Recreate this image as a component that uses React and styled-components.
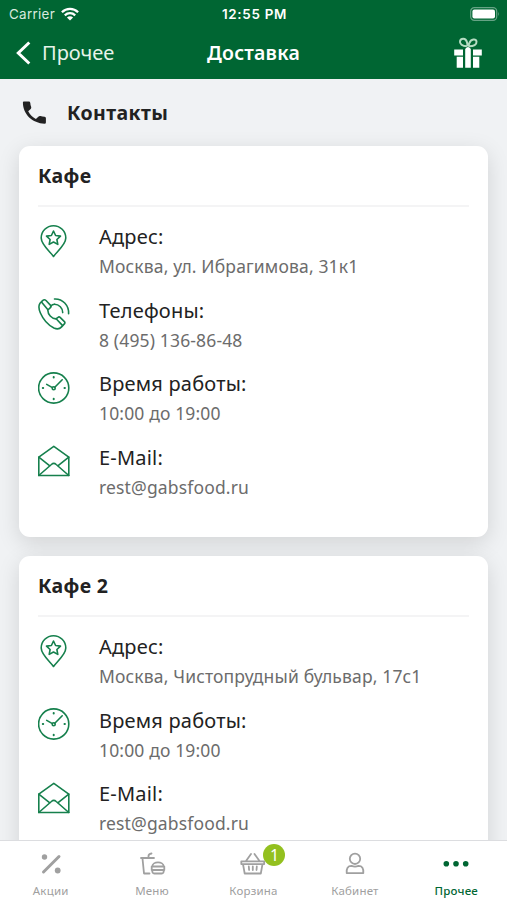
import React from 'react'
import styled, { createGlobalStyle } from 'styled-components';


const GlobalStyle = createGlobalStyle`
    * {
        box-sizing:border-box;
    }

    body{
        margin:0;
        overflow:hidden;
        font-family:'Noto Sans', 'Open Sans', sans-serif;
    }
`;

const Screen = styled.div`
    width:507px;
    height:900px;
    display:flex;
    flex-direction:column;
    overflow:hidden;
    background:#f0f2f4;
`;

const Header = styled.header`
    flex:none;
    height:79px;
    color:white;
    background:#006633;
`;

const StatusBar = styled.div`
    height:27px;
    padding:0 7px 0 9px;
    display:grid;
    grid-template-columns:1fr auto 1fr;
    align-items:center;
    font-family:Inter, 'Liberation Sans', sans-serif;
    font-size:13.4px;

    svg{
        display:block;
    }
`;

const Carrier = styled.div`
    display:flex;
    align-items:center;
    gap:6px;
    color:#d9eadf;
    letter-spacing:0.3px;
`;

const Time = styled.div`
    font-weight:600;
    letter-spacing:0.7px;
`;

const Battery = styled.div`
    display:flex;
    justify-content:flex-end;
`;

const NavBar = styled.div`
    height:51px;
    padding:0 24px 0 16px;
    display:grid;
    grid-template-columns:1fr auto 1fr;
    align-items:center;

    svg{
        display:block;
    }
`;

const Back = styled.div`
    display:flex;
    align-items:center;
    gap:11px;
    font-size:20px;
    line-height:26px;
    color:#e6f3ea;
`;

const Title = styled.h1`
    margin:0 0 0 8px;
    font-size:19.5px;
    font-weight:600;
    line-height:26px;
    letter-spacing:0.2px;
`;

const Gift = styled.div`
    display:flex;
    justify-content:flex-end;
`;

const Content = styled.main`
    flex:1;
    min-height:0;
    overflow:hidden;
    padding:0 19px;
`;

const SectionTitle = styled.div`
    height:67px;
    padding-left:3px;
    display:flex;
    align-items:center;
    gap:20px;

    h2{
        margin:0;
        font-size:19.5px;
        font-weight:700;
        letter-spacing:0.4px;
        color:#222222;
    }
`;

const Card = styled.section`
    height:391px;
    margin-bottom:19px;
    padding:0 19px;
    border-radius:11px;
    background:white;
    box-shadow:0 6px 22px rgba( 0, 0, 0, 0.13 );

    h3{
        height:61px;
        margin:0 0 15.4px;
        border-bottom:2px solid #f4f4f5;
        font-size:19.5px;
        font-weight:700;
        line-height:60px;
        letter-spacing:0.3px;
        color:#222222;
    }
`;

const Row = styled.div`
    height:73.5px;
    display:flex;
    gap:29px;

    svg{
        flex:none;
        margin-top:1.5px;
    }
`;

const Label = styled.div`
    height:29px;
    font-size:20px;
    line-height:29px;
    white-space:nowrap;
    letter-spacing:0.2px;
    color:#222222;
`;

const Value = styled.div`
    height:30px;
    font-size:17.5px;
    line-height:30px;
    white-space:nowrap;
    letter-spacing:0.15px;
    color:#6c6c6c;
`;

const TabBar = styled.nav`
    flex:none;
    height:60px;
    display:grid;
    grid-template-columns:repeat(5, 1fr);
    border-top:1px solid #dcdde0;
    background:white;
`;

const Tab = styled.div`
    display:flex;
    flex-direction:column;
    align-items:center;
    font-size:11.5px;
    line-height:16px;
    font-weight:${props => props.$active ? 500 : 400};
    color:${props => props.$active ? '#006633' : '#a0a0a0'};
    letter-spacing:0.2px;
`;

const TabIcon = styled.div`
    position:relative;
    height:42px;
    padding-top:7px;

    svg{
        display:block;
    }
`;

//cart counter
const Badge = styled.span`
    position:absolute;
    top:3px;
    left:26px;
    width:22px;
    height:22px;
    border-radius:50%;
    background:#93c01f;
    color:white;
    font-size:16px;
    line-height:22px;
    text-align:center;
    letter-spacing:0;
`;

const LineIcon = styled.svg.attrs({ width: 32, height: 34, viewBox: '0 0 32 34' })`
    fill:none;
    stroke:#16804d;
    stroke-width:1.6;
    stroke-linecap:round;
    stroke-linejoin:round;
`;

const TabSvg = styled.svg.attrs({ width: 32, height: 32, viewBox: '0 0 32 32' })`
    fill:none;
    stroke:currentColor;
    stroke-width:1.8;
    stroke-linecap:round;
    stroke-linejoin:round;
`;


const PinIcon = () => (
    <LineIcon>
        <path d="M15.5 32.5C13.5 29 3.2 21 3.2 14a12.3 12.3 0 0 1 24.6 0C27.8 21 17.5 29 15.5 32.5z" />
        <path d="M15.5 7l2.1 4.5 4.9.6-3.6 3.4.9 4.900-4.300-2.400-4.300 2.400.9-4.900-3.600-3.400 4.900-.6z" />
    </LineIcon>
)

const PhoneIcon = () => (
    <LineIcon>
        <path d="M4.600 3.600 2 6.300C.2 8.800.7 12 2.400 16c3 6.900 8 12.200 13.500 15 3.500 1.600 6 .8 7.700-1.100l3-3.300q.7-1-.2-2l-4.300-4.200q-1-.9-2.100 0l-2 1.500c-4.300-.3-8.400-4.600-8.100-8.900l2.700-2.600q.8-1 0-2L8 3.500q-1.600-1.600-3.400.1z" />
        <path d="M3.700 5.300l6 7.300M18.600 22.300l5.800 6.100M16.500 7.300c4.500 0 8.300 3.700 8.200 8.300M16.500 2C24.600 1.600 31 8.200 30.600 16.700" />
        <path d="M12.600 9.200q1.700-1.900 3.900-1.900" />
    </LineIcon>
)

const ClockIcon = () => (
    <LineIcon>
        <circle cx="15.7" cy="17" r="15.1" />
        <path d="M8.7 13.4l5.7 3.2M16.8 16.2l7.4-7.4" />
        <circle cx="15.7" cy="17.2" r="1.5" />
        <path d="M15.7 6v.4M15.7 27.8v.4M4.8 17h.4M26.5 17h.4" strokeWidth="2" />
    </LineIcon>
)

const MailIcon = () => (
    <LineIcon>
        <path d="M.8 13.2 15.8 2.3l15 10.9v18.3H.8z" />
        <path d="M.8 13.2l11 8.7M30.8 13.2l-11 8.7M.8 31.5l12.6-11q2.4-2.2 4.8 0l12.6 11" />
    </LineIcon>
)

const icons = {
    pin: PinIcon,
    phone: PhoneIcon,
    clock: ClockIcon,
    mail: MailIcon,
}

const cafes = [
    {
        name: 'Кафе',
        rows: [
            { icon: 'pin', label: 'Адрес:', value: 'Москва, ул. Ибрагимова, 31к1' },
            { icon: 'phone', label: 'Телефоны:', value: '8 (495) 136-86-48' },
            { icon: 'clock', label: 'Время работы:', value: '10:00 до 19:00' },
            { icon: 'mail', label: 'E-Mail:', value: 'rest@gabsfood.ru' },
        ],
    },
    {
        name: 'Кафе 2',
        rows: [
            { icon: 'pin', label: 'Адрес:', value: 'Москва, Чистопрудный бульвар, 17с1' },
            { icon: 'clock', label: 'Время работы:', value: '10:00 до 19:00' },
            { icon: 'mail', label: 'E-Mail:', value: 'rest@gabsfood.ru' },
        ],
    },
]

export default function App() {

    return (
        <Screen>
            <GlobalStyle />
            <Header>
                <StatusBar>
                    <Carrier>
                        Carrier
                        <svg width="18" height="14" viewBox="0 0 18 14" fill="none" stroke="white" strokeWidth="2.3">
                            <path d="M.9 5.2C5.5.7 12.5.7 17.1 5.2M3.8 8.3c3-2.8 7.4-2.8 10.4 0" />
                            <path d="M9 13.6 5.9 10.4q3.1-2.4 6.2 0z" fill="white" stroke="none" />
                        </svg>
                    </Carrier>
                    <Time>12:55 PM</Time>
                    <Battery>
                        <svg width="30" height="14" viewBox="0 0 30 14">
                            <rect x=".7" y=".7" width="26" height="12.6" rx="3.6" fill="none" stroke="#66a385" strokeWidth="1.2" />
                            <rect x="2.4" y="2.4" width="22.6" height="9.2" rx="2" fill="white" />
                            <path d="M28.2 4.8q1.6 2.2 0 4.4z" fill="#66a385" />
                        </svg>
                    </Battery>
                </StatusBar>
                <NavBar>
                    <Back>
                        <svg width="15" height="24" viewBox="0 0 15 24" fill="none" stroke="white" strokeWidth="3">
                            <path d="M13.3 1.5 2.3 12l11 10.5" />
                        </svg>
                        <span>Прочее</span>
                    </Back>
                    <Title>Доставка</Title>
                    <Gift>
                        <svg width="30" height="32" viewBox="0 0 30 32" fill="white">
                            <path d="M1.2 12.5h8.8v6H1.2zM20 12.5h8.8v6H20zM3.7 19.8h6.3v11H3.7zM20 19.8h6.3v11H20z" />
                            <path d="M12.2 12q2.8-3.8 5.6 0v18.8h-5.6z" />
                            <path d="M13.8 9.3C9.3 9.3 6.5 7 7 4.3 7.8 1 12.7.8 13.9 5q.6 2.2.8 4.5M16.2 9.3c4.5 0 7.6-1.7 7.3-4.7C23 1.7 18 1.6 16.2 6.4L15.2 9.6" fill="none" stroke="#b5dcc2" strokeWidth="2" />
                        </svg>
                    </Gift>
                </NavBar>
            </Header>
            <Content>
                <SectionTitle>
                    <svg width="25" height="25" viewBox="0 0 25 25" fill="#222222">
                        <path d="M1.5 1.5h5.4q1.2 0 1.4 1.4.1 2.3.9 4.2.3 1-.5 1.8L6.2 11.3q2.7 5.2 7.7 7.7l2.7-2.6q.8-.7 1.8-.4 2 .7 4.2.8 1.3.1 1.3 1.3v4.5q0 1.2-1.3 1.2C10.5 23.3.9 14.5.9 2.6q0-.8.6-1.1z" />
                    </svg>
                    <h2>Контакты</h2>
                </SectionTitle>
                {cafes.map(cafe => (
                    <Card key={cafe.name}>
                        <h3>{cafe.name}</h3>
                        {cafe.rows.map(row => {
                            const Icon = icons[row.icon]
                            return (
                                <Row key={row.label}>
                                    <Icon />
                                    <div>
                                        <Label>{row.label}</Label>
                                        <Value>{row.value}</Value>
                                    </div>
                                </Row>
                            )
                        })}
                    </Card>
                ))}
            </Content>
            <TabBar>
                <Tab>
                    <TabIcon>
                        <TabSvg>
                            <path d="M8.5 24 24 8.5" strokeWidth="3" />
                            <circle cx="9.5" cy="9" r="2.7" fill="currentColor" stroke="none" />
                            <circle cx="22.7" cy="22.5" r="2.9" fill="currentColor" stroke="none" />
                        </TabSvg>
                    </TabIcon>
                    Акции
                </Tab>
                <Tab>
                    <TabIcon>
                        <TabSvg>
                            <path d="M5 10h13M6.5 10.5l1.5 15h5.5M12.500 9.500V8q0-2 3-2.500" />
                            <path d="M16.300 18.500c0-5.500 11.400-5.500 11.400 0zM15.700 18.500h12.600v3.500H15.700zM16.300 22q-.3 3.500 2 3.500h7.400q2.300 0 2-3.500" />
                        </TabSvg>
                    </TabIcon>
                    Меню
                </Tab>
                <Tab>
                    <TabIcon>
                        <TabSvg>
                            <path d="M4.300 13.300h22.900v2.800H4.300zM6 16.100l1.700 9.400h16.100l1.700-9.400M9 13l5-7M22.500 13l-5-7" />
                            <path d="M11.800 18.500l.3 3.500M15.800 18.500v3.500M19.800 18.500l-.3 3.500" />
                        </TabSvg>
                        <Badge>1</Badge>
                    </TabIcon>
                    Корзина
                </Tab>
                <Tab>
                    <TabIcon>
                        <TabSvg>
                            <circle cx="16" cy="10.8" r="5.2" />
                            <path d="M7.7 25.2q-.7-7.3 4.8-7.3 3.5 1.5 7 0 5.5 0 4.8 7.3z" />
                        </TabSvg>
                    </TabIcon>
                    Кабинет
                </Tab>
                <Tab $active>
                    <TabIcon>
                        <TabSvg>
                            <path d="M6.3 15.8h.01M16 15.8h.01M25.7 15.8h.01" strokeWidth="5.6" />
                        </TabSvg>
                    </TabIcon>
                    Прочее
                </Tab>
            </TabBar>
        </Screen>
    )
}
